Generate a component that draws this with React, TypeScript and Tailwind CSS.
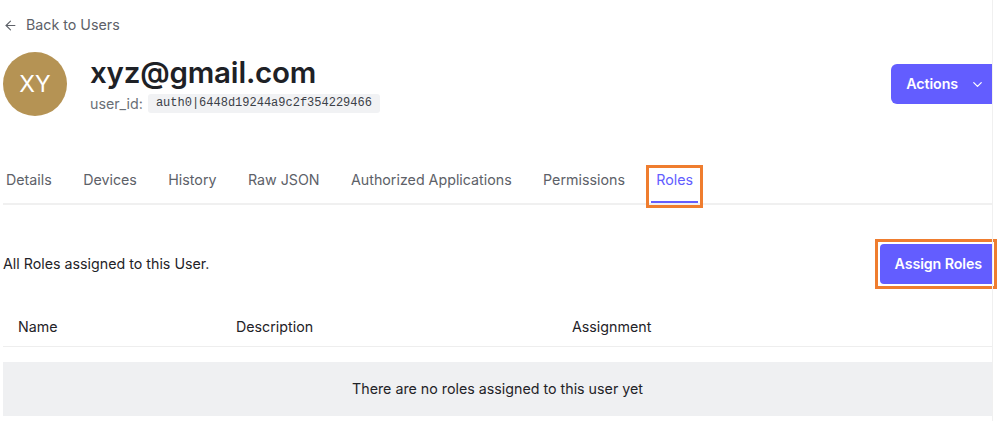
import { ArrowLeft, ChevronDown } from "lucide-react";

const tabs = [
  "Details",
  "Devices",
  "History",
  "Raw JSON",
  "Authorized Applications",
  "Permissions",
  "Roles",
];

function Tabs() {
  return (
    <div className="flex gap-[21.4px] border-b-2 border-[#f0f0f0]">
      {tabs.map((t, i) => {
        const active = t === "Roles";
        return (
          <button
            key={t}
            className={
              (i === 0 ? "-ml-[2px] " : "") +
              (active
                ? "px-[5px] pb-[11px] border-b-[2px] border-[#635dff] text-[#635dff] outline-[3px] outline-solid outline-[#ef7d2f] outline-offset-[2px] leading-5"
                : "px-[5px] pb-[11px] border-b-[2px] border-transparent text-[#5d6168] leading-5")
            }
          >
            {t}
          </button>
        );
      })}
    </div>
  );
}

export default function App() {
  return (
    <div
      className="flex min-h-[421px] bg-white text-[14.25px] text-[#1f2328]"
      style={{ fontFamily: "Inter, 'Noto Sans', sans-serif" }}
    >
      <div className="ml-[3px] w-[989px] pt-[15px]">
        <a className="flex items-center gap-[8px] leading-5 text-[#5d6168]">
          <ArrowLeft size={15} strokeWidth={1.75} className="text-[#5d6168]" />
          <span>Back to Users</span>
        </a>

        <div className="mt-[17px] flex items-center justify-between">
          <div className="flex items-center gap-[23px]">
            <div className="flex h-16 w-16 items-center justify-center rounded-full bg-[#b59354] text-[23px] text-white">
              XY
            </div>
            <div className="flex flex-col">
              <h1 className="text-[29.5px] font-semibold leading-9 tracking-[-0.2px] text-[#1e2126]">
                xyz@gmail.com
              </h1>
              <div className="mt-[3px] flex items-center gap-[5px] text-[#6a6f76]">
                <span>user_id:</span>
                <code
                  className="rounded-[3px] bg-[#f1f2f4] px-2 py-[1px] text-[12px] leading-[17px] text-[#3b4047]"
                  style={{ fontFamily: "'Liberation Mono', monospace" }}
                >
                  auth0|6448d19244a9c2f354229466
                </code>
              </div>
            </div>
          </div>
          <button className="flex h-10 items-center gap-[12px] rounded-l-md bg-[#635dff] pl-[15px] pr-[7px] font-semibold tracking-[-0.1px] text-white">
            Actions
            <ChevronDown size={15} strokeWidth={2} />
          </button>
        </div>

        <div className="mt-[54px]">
          <Tabs />
        </div>

        <div className="mt-[39px] flex items-center justify-between">
          <p>All Roles assigned to this User.</p>
          <div className="outline-[3px] outline-solid outline-[#ef7d2f] outline-offset-[2px]">
            <button className="block h-10 rounded-l-[4px] bg-[#635dff] pl-[15px] pr-[10px] font-semibold tracking-[-0.1px] text-white">
              Assign Roles
            </button>
          </div>
        </div>

        <div className="mt-[33px]">
          <div className="grid grid-cols-[218px_336px_1fr] border-b border-[#eeeeee] pb-[9px] pl-[15px] leading-5">
            <span>Name</span>
            <span>Description</span>
            <span>Assignment</span>
          </div>
          <div className="mt-[15px] flex h-[54px] items-center justify-center bg-[#eff0f2]">
            There are no roles assigned to this user yet
          </div>
        </div>
      </div>
      <div className="w-px bg-[#f0f0f0]" />
    </div>
  );
}
